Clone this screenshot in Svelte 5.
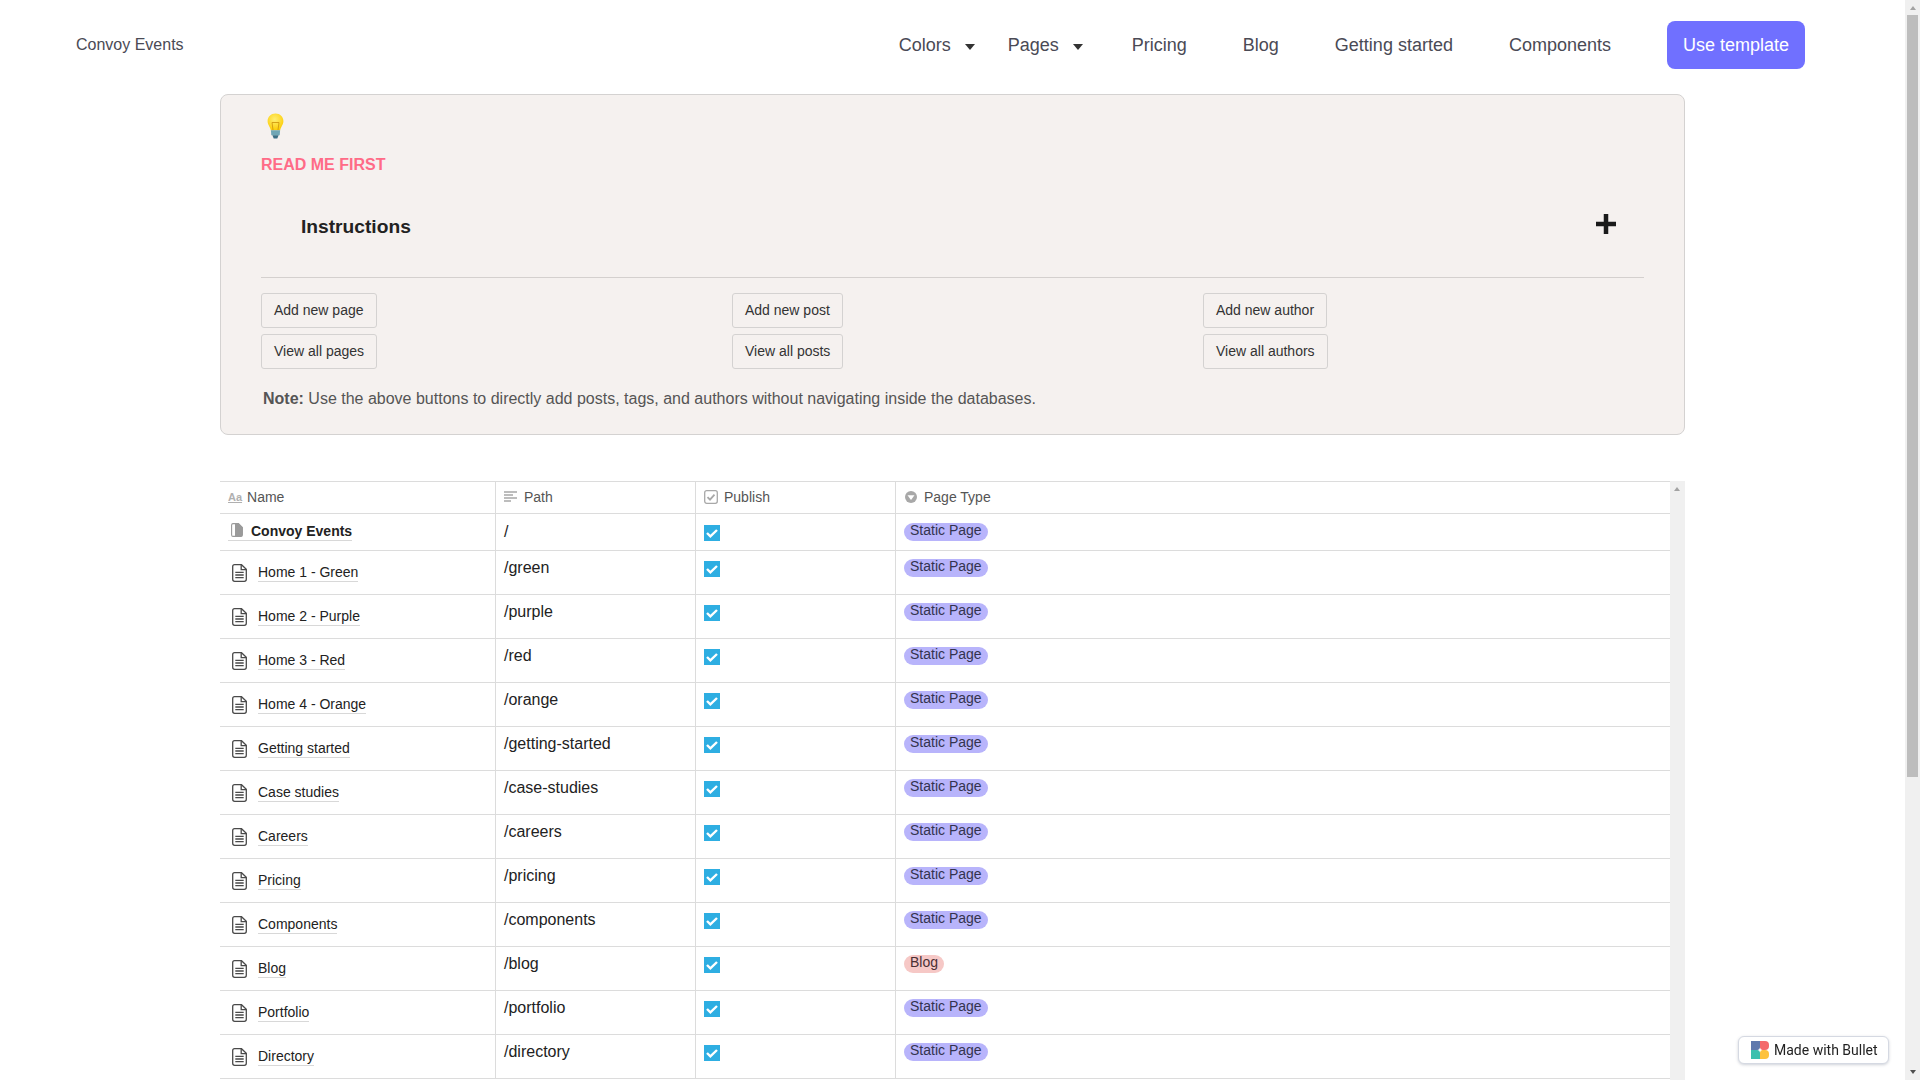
<script>
  const rows = [
    ['Home 1 - Green', '/green'],
    ['Home 2 - Purple', '/purple'],
    ['Home 3 - Red', '/red'],
    ['Home 4 - Orange', '/orange'],
    ['Getting started', '/getting-started'],
    ['Case studies', '/case-studies'],
    ['Careers', '/careers'],
    ['Pricing', '/pricing'],
    ['Components', '/components'],
    ['Blog', '/blog', 'blog'],
    ['Portfolio', '/portfolio'],
    ['Directory', '/directory']
  ];
  const links = ['Pricing', 'Blog', 'Getting started', 'Components'];
  const actions = [
    ['Add new page', 'View all pages'],
    ['Add new post', 'View all posts'],
    ['Add new author', 'View all authors']
  ];
</script>

{#snippet check()}
  <svg class="check" viewBox="0 0 16 16"><rect width="16" height="16" fill="#2eaee2" /><path d="M3 8l3.4 3.4L13 5" fill="none" stroke="#fff" stroke-width="2.4" /></svg>
{/snippet}

{#snippet tag(blog)}
  <span class="tag" class:blog>{blog ? 'Blog' : 'Static Page'}</span>
{/snippet}

<div class="shell">
  <div class="page">
    <nav class="nav">
      <span class="brand">Convoy Events</span>
      <div class="menu">
        <span class="link drop first">Colors<i class="caret"></i></span>
        <span class="link drop second">Pages<i class="caret"></i></span>
        {#each links as l}<span class="link">{l}</span>{/each}
        <span class="cta">Use template</span>
      </div>
    </nav>

    <main class="container">
      <section class="card">
        <svg class="bulb" viewBox="0 0 17 26">
          <defs>
            <radialGradient id="b" cx="0.45" cy="0.35" r="0.7"><stop offset="0" stop-color="#ffee70" /><stop offset="1" stop-color="#fccb00" /></radialGradient>
          </defs>
          <path d="M8.5 .5C4 .5 .6 3.8 .6 8.2c0 3.7 2.7 5.6 3.2 9h9.4c.5-3.4 3.2-5.3 3.2-9C16.4 3.8 13 .5 8.5 .5z" fill="url(#b)" />
          <path d="M6 17L5 9.5h7L11 17" fill="none" stroke="#d19a10" stroke-width="0.9" />
          <path d="M3.9 17.2h9.2l-.4 5H4.3z" fill="#6fa6b5" />
          <path d="M5.4 22.2h6.2L10.3 25.5H6.7z" fill="#3a6f85" />
        </svg>
        <p class="eyebrow">READ ME FIRST</p>
        <div class="summary">
          <h3>Instructions</h3>
          <svg class="plus" viewBox="0 0 20 20"><path d="M10 0v20M0 10h20" stroke="#1a1a1a" stroke-width="4.5" /></svg>
        </div>
        <div class="actions">
          {#each actions as col}
            <div class="col">
              {#each col as a}<span class="btn">{a}</span>{/each}
            </div>
          {/each}
        </div>
        <p class="note"><b>Note:</b> Use the above buttons to directly add posts, tags, and authors without navigating inside the databases.</p>
      </section>

      <section class="frame">
        <div class="table">
          <div class="row head">
            <div class="cell name">
              <span class="aa">Aa</span>Name
            </div>
            <div class="cell">
              <svg class="hicon" viewBox="0 0 14 12"><path d="M0 1h13M0 4h9M0 7h13M0 10h7" stroke="#a8a8a8" stroke-width="1.5" /></svg>Path
            </div>
            <div class="cell">
              <svg class="hicon" viewBox="0 0 14 14"><rect x=".7" y=".7" width="12.6" height="12.6" rx="2" fill="none" stroke="#a8a8a8" stroke-width="1.3" /><path d="M3.5 7.2l2.5 2.5 4.5-5" fill="none" stroke="#a8a8a8" stroke-width="1.8" /></svg>Publish
            </div>
            <div class="cell">
              <svg class="hicon" viewBox="0 0 14 14"><circle cx="7" cy="7" r="6" fill="#a8a8a8" /><path d="M3.5 5.2h7L7 10z" fill="#fff" /></svg>Page Type
            </div>
          </div>

          <div class="row top">
            <div class="cell">
              <span class="title strong">
                <svg class="mini" viewBox="0 0 12 14"><path d="M.6 2A1.5 1.5 0 0 1 2 .6h5.5L11.4 4.5V12A1.5 1.5 0 0 1 10 13.4H2A1.5 1.5 0 0 1 .6 12z" fill="#fff" stroke="#9a9a9a" stroke-width="1.1" /><path d="M4 .6h3.5L11.4 4.5V12A1.5 1.5 0 0 1 10 13.4H4z" fill="#9a9a9a" /></svg>Convoy Events
              </span>
            </div>
            <div class="cell path">/</div>
            <div class="cell">{@render check()}</div>
            <div class="cell">{@render tag(false)}</div>
          </div>

          {#each rows as [label, path, kind]}
            <div class="row">
              <div class="cell item">
                <svg class="doc" viewBox="0 0 15 18">
                  <path d="M.7 2.6A1.9 1.9 0 0 1 2.6 .7H9.5L14.3 5.3V15.3A2 2 0 0 1 12.3 17.3H2.7A2 2 0 0 1 .7 15.3z" fill="none" stroke="#4a4a4a" stroke-width="1.3" />
                  <path d="M9.2 1v4.7H14.3M3.3 8.4h8.4M3.3 11h8.4M3.3 13.6h8.4" fill="none" stroke="#4a4a4a" stroke-width="1.3" />
                </svg>
                <span class="title">{label}</span>
              </div>
              <div class="cell path">{path}</div>
              <div class="cell">{@render check()}</div>
              <div class="cell">{@render tag(kind === 'blog')}</div>
            </div>
          {/each}
        </div>
        <div class="track"><i class="up"></i></div>
      </section>
    </main>
  </div>

  <div class="vbar">
    <i class="bar-up"></i>
    <div class="thumb"></div>
    <i class="down"></i>
  </div>

  <div class="made">
    <svg class="logo" viewBox="0 0 18 18">
      <rect width="9" height="9" fill="#5f79ad" />
      <path d="M9 0h5a4 4 0 0 1 4 4v1a4 4 0 0 1-4 4H9z" fill="#f4696c" />
      <rect y="9" width="9" height="9" fill="#3cc0ae" />
      <path d="M9 9h5a4 4 0 0 1 4 4v1a4 4 0 0 1-4 4H9z" fill="#fdc23e" />
      <path d="M9 6.5L9.8 8.2 11.5 9 9.8 9.8 9 11.5 8.2 9.8 6.5 9 8.2 8.2z" fill="#fff" />
    </svg>
    Made with Bullet
  </div>
</div>

<style>
  :global(body) {
    margin: 0;
    background: #fff;
    overflow: hidden;
  }
  .shell {
    display: flex;
    height: 100vh;
    overflow: hidden;
    font-family: "Liberation Sans", Arial, sans-serif;
    color: #222;
  }
  .page {
    flex: 1;
    min-width: 0;
    overflow: hidden;
  }
  .vbar {
    flex: none;
    display: flex;
    flex-direction: column;
    align-items: center;
    width: 15px;
    background: #f0f0f0;
  }
  .bar-up {
    margin: 6px 0 5px;
    border-left: 3.5px solid transparent;
    border-right: 3.5px solid transparent;
    border-bottom: 4px solid #a3a3a3;
  }
  .thumb {
    width: 11px;
    height: 762px;
    background: #bdbdbd;
  }
  .down {
    margin-top: auto;
    margin-bottom: 6px;
    border-left: 3.5px solid transparent;
    border-right: 3.5px solid transparent;
    border-top: 4px solid #505050;
  }

  .nav {
    display: flex;
    align-items: center;
    justify-content: space-between;
    height: 48px;
    padding: 21px 100px 25px 76px;
  }
  .brand {
    font-size: 16px;
    color: #4a4a55;
  }
  .menu {
    display: flex;
    align-items: center;
    font-size: 18px;
    color: #4a4a55;
  }
  .link {
    margin-right: 56px;
  }
  .drop {
    display: inline-flex;
    align-items: center;
    margin-right: 0;
  }
  .drop.first {
    width: 109px;
  }
  .drop.second {
    width: 124px;
  }
  .caret {
    width: 0;
    height: 0;
    margin: 4px 0 0 14px;
    border-left: 5px solid transparent;
    border-right: 5px solid transparent;
    border-top: 6px solid #333;
  }
  .cta {
    display: flex;
    align-items: center;
    justify-content: center;
    width: 138px;
    height: 48px;
    border-radius: 8px;
    background: #7070ff;
    color: #fff;
  }

  .container {
    width: 1465px;
    margin: 0 auto;
  }
  .card {
    box-sizing: border-box;
    height: 341px;
    padding: 18px 40px 0;
    background: #f5f1ef;
    border: 1px solid #d4d2d1;
    border-radius: 8px;
  }
  .bulb {
    display: block;
    width: 17px;
    height: 26px;
    margin-left: 6px;
  }
  .eyebrow {
    margin: 16px 0 0;
    font-size: 16px;
    line-height: 20px;
    font-weight: 700;
    color: #ff6b87;
  }
  .summary {
    display: flex;
    align-items: flex-start;
    justify-content: space-between;
    box-sizing: border-box;
    height: 103px;
    padding: 39px 28px 0 40px;
    border-bottom: 1px solid #d4d0ce;
  }
  .summary h3 {
    margin: 1px 0 0;
    font-size: 19.2px;
    line-height: 24px;
    font-weight: 700;
    color: #222;
  }
  .plus {
    width: 20px;
    height: 20px;
  }
  .actions {
    display: grid;
    grid-template-columns: repeat(3, 1fr);
    gap: 30px;
    margin-top: 15px;
  }
  .col {
    display: flex;
    flex-direction: column;
    align-items: flex-start;
    gap: 6px;
  }
  .btn {
    box-sizing: border-box;
    height: 35px;
    padding: 0 12px;
    border: 1px solid #d4d2d1;
    border-radius: 3px;
    font-size: 14px;
    line-height: 32px;
    color: #333;
  }
  .note {
    margin: 20px 0 0 2px;
    font-size: 16px;
    line-height: 20px;
    color: #555;
  }

  .frame {
    display: flex;
    height: 620px;
    margin-top: 46px;
    overflow: hidden;
  }
  .table {
    flex: 1;
    min-width: 0;
    border-top: 1px solid #dcdcdc;
  }
  .row {
    display: grid;
    grid-template-columns: 276px 200px 200px 1fr;
    box-sizing: border-box;
    height: 44px;
    border-bottom: 1px solid #dcdcdc;
  }
  .row.head {
    height: 32px;
    font-size: 14px;
    color: #555;
  }
  .row.top {
    height: 37px;
  }
  .cell {
    box-sizing: border-box;
    min-width: 0;
    padding: 8px 8px 0;
    border-right: 1px solid #dcdcdc;
    font-size: 14px;
  }
  .top .cell {
    padding-top: 9px;
  }
  .cell:last-child {
    border-right: 0;
  }
  .head .cell {
    display: flex;
    align-items: center;
    gap: 6px;
    padding: 0 8px 2px;
  }
  .head .name {
    gap: 5px;
  }
  .aa {
    font-size: 11px;
    font-weight: 700;
    color: #b0b0b0;
    text-decoration: underline;
  }
  .hicon {
    width: 14px;
    height: 14px;
    flex: none;
  }
  .title {
    color: #222;
    border-bottom: 1px solid #d8d8d8;
    padding-bottom: 1px;
  }
  .strong {
    display: inline-flex;
    align-items: center;
    gap: 8px;
    font-weight: 700;
  }
  .mini {
    width: 12px;
    height: 14px;
    margin: -2px 0 0 3px;
  }
  .item {
    display: flex;
    align-items: center;
    gap: 11px;
    padding: 0 8px 0 12px;
  }
  .doc {
    width: 15px;
    height: 18px;
    flex: none;
  }
  .path {
    font-size: 16px;
    line-height: 18px;
  }
  .check {
    display: block;
    width: 16px;
    height: 16px;
    margin-top: 2px;
  }
  .tag {
    display: inline-block;
    height: 18px;
    padding: 0 6px;
    border-radius: 9px;
    background: #b8b4fb;
    color: #33334f;
    line-height: 15px;
    vertical-align: top;
  }
  .tag.blog {
    background: #f6c8c6;
    color: #4a2f33;
  }
  .track {
    flex: none;
    position: relative;
    width: 15px;
    background: #f0f0f0;
  }
  .up {
    position: absolute;
    top: 6px;
    left: 4px;
    border-left: 3.5px solid transparent;
    border-right: 3.5px solid transparent;
    border-bottom: 4px solid #a3a3a3;
  }

  .made {
    position: fixed;
    right: 31px;
    bottom: 16px;
    display: flex;
    align-items: center;
    gap: 5px;
    box-sizing: border-box;
    width: 151px;
    height: 28px;
    padding-left: 12px;
    background: #fff;
    border: 1px solid #d5d9e2;
    border-radius: 6px;
    box-shadow: 0 1px 3px rgba(60, 70, 100, 0.25);
    font-family: Roboto, "Liberation Sans", sans-serif;
    font-size: 14px;
    color: #222;
  }
  .logo {
    width: 18px;
    height: 18px;
  }
</style>
